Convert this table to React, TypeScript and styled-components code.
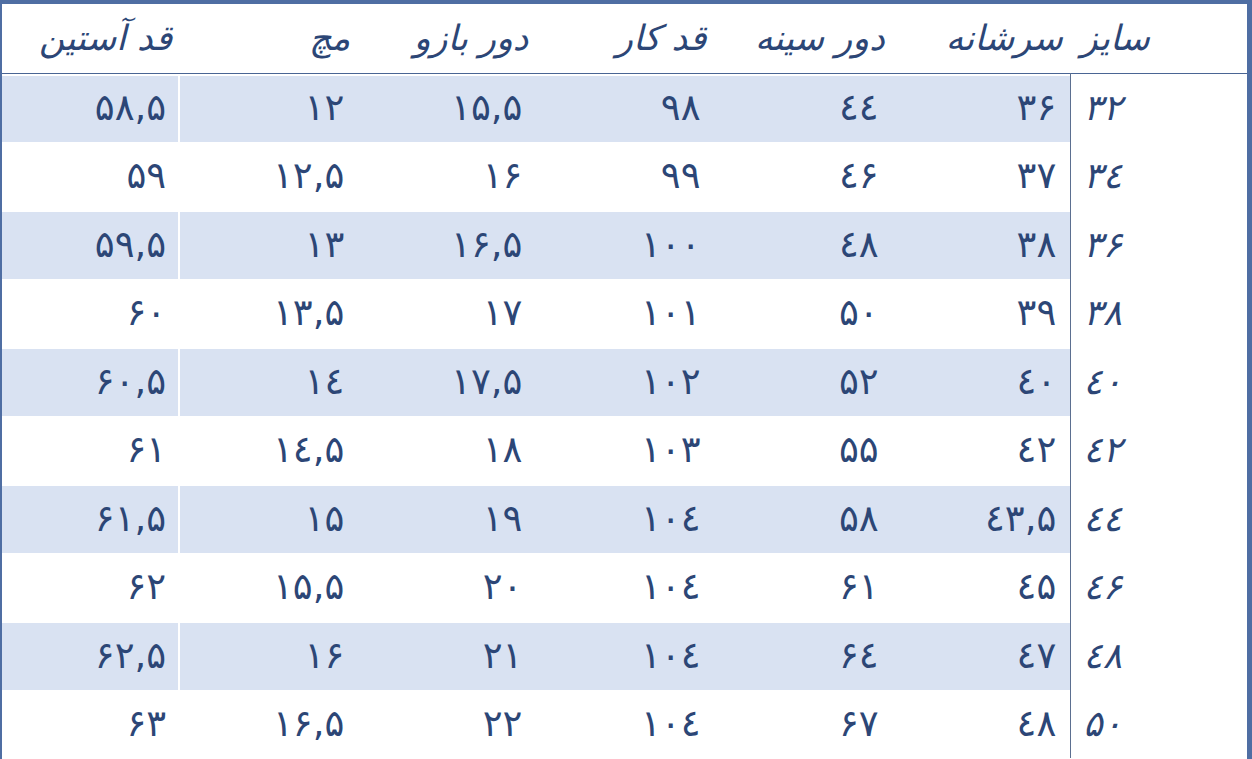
import React from "react";
import styled, { createGlobalStyle } from "styled-components";

const Global = createGlobalStyle`
  html, body { margin: 0; padding: 0; background: #ffffff; }
  body { width: 1252px; height: 759px; overflow: hidden; }
`;

const Frame = styled.div`
  box-sizing: border-box;
  width: 1252px;
  height: 759px;
  border-top: 4px solid #4f6ea3;
  border-left: 2px solid #4f6ea3;
  border-right: 5px solid #4f6ea3;
  background: #ffffff;
  overflow: hidden;
`;

const Table = styled.table`
  direction: rtl;
  width: 1245px;
  border-collapse: collapse;
  table-layout: fixed;
  font-family: "DejaVu Sans", sans-serif;
  color: #2c4676;
`;

const Col = styled.col<{ $w: number }>`
  width: ${(p) => p.$w}px;
`;

const HeadRow = styled.tr`
  height: 69px;
  border-bottom: 1px solid #4a6594;
`;

const HeadCell = styled.th<{ $size?: boolean }>`
  padding: 0 ${(p) => (p.$size ? "0" : "8px")} 0 ${(p) => (p.$size ? "10px" : "0")};
  text-align: ${(p) => (p.$size ? "left" : "right")};
  font-weight: normal;
  font-style: italic;
  font-size: 35px;
  color: #2c4676;
  vertical-align: middle;
  white-space: nowrap;
`;

const Row = styled.tr`
  height: 68.5px;
`;

const Cell = styled.td<{ $shade: boolean; $last?: boolean }>`
  padding: 0 14px 0 0;
  text-align: right;
  font-size: 37px;
  vertical-align: middle;
  background: ${(p) => (p.$shade ? "#d9e2f2" : "#ffffff")};
  box-shadow: inset 0 2px 0 #ffffff
    ${(p) => (p.$last ? ", inset -2px 0 0 #ffffff" : "")};
`;

const SizeCell = styled.td`
  padding: 0 0 0 12px;
  text-align: left;
  font-size: 36px;
  font-style: italic;
  vertical-align: middle;
  background: #ffffff;
  border-left: 1px solid #5b6f90;
`;

const Num = styled.span`
  direction: ltr;
  unicode-bidi: isolate;
  display: inline-block;
`;

const toFa = (v: string) =>
  v
    .replace(/\./g, ",")
    .replace(/[0-9]/g, (d) => (d === "4" ? "٤" : "۰۱۲۳۴۵۶۷۸۹"[Number(d)]));

const headers = ["سرشانه", "دور سینه", "قد کار", "دور بازو", "مچ", "قد آستین"];

const rows: string[][] = [
  ["32", "36", "44", "98", "15.5", "12", "58.5"],
  ["34", "37", "46", "99", "16", "12.5", "59"],
  ["36", "38", "48", "100", "16.5", "13", "59.5"],
  ["38", "39", "50", "101", "17", "13.5", "60"],
  ["40", "40", "52", "102", "17.5", "14", "60.5"],
  ["42", "42", "55", "103", "18", "14.5", "61"],
  ["44", "43.5", "58", "104", "19", "15", "61.5"],
  ["46", "45", "61", "104", "20", "15.5", "62"],
  ["48", "47", "64", "104", "21", "16", "62.5"],
  ["50", "48", "67", "104", "22", "16.5", "63"],
];

export default function App() {
  return (
    <>
      <Global />
      <Frame>
        <Table>
          <colgroup>
            <Col $w={176} />
            {headers.map((h) => (
              <Col key={h} $w={178} />
            ))}
          </colgroup>
          <thead>
            <HeadRow>
              <HeadCell $size>سایز</HeadCell>
              {headers.map((h) => (
                <HeadCell key={h}>{h}</HeadCell>
              ))}
            </HeadRow>
          </thead>
          <tbody>
            {rows.map((r, i) => (
              <Row key={r[0]}>
                <SizeCell>
                  <Num>{toFa(r[0])}</Num>
                </SizeCell>
                {r.slice(1).map((v, j) => (
                  <Cell key={j} $shade={i % 2 === 0} $last={j === 5}>
                    <Num>{toFa(v)}</Num>
                  </Cell>
                ))}
              </Row>
            ))}
          </tbody>
        </Table>
      </Frame>
    </>
  );
}
